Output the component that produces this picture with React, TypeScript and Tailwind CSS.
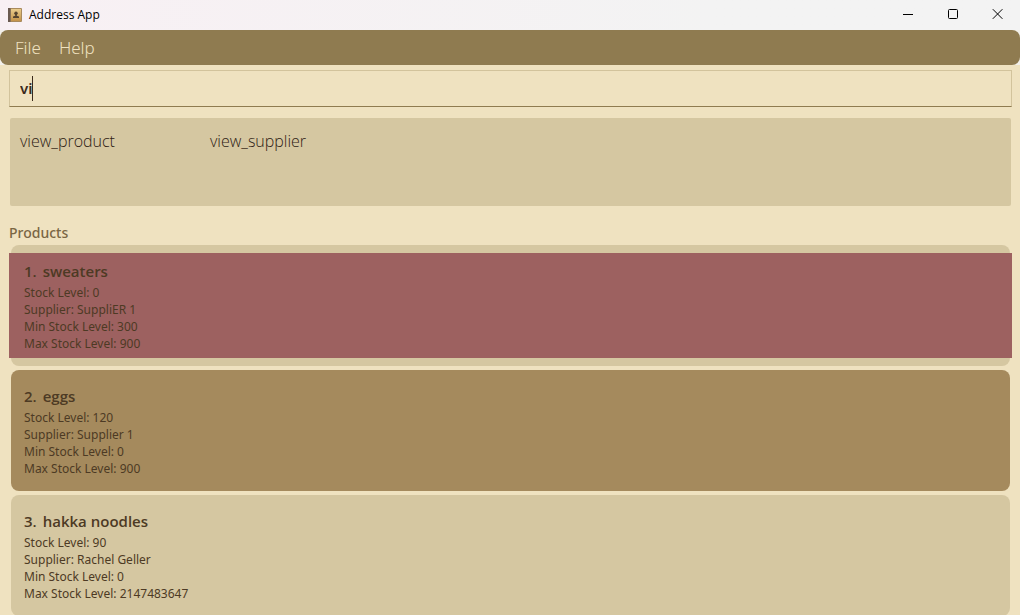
import { useState } from "react";

type Product = {
  name: string;
  stock: number;
  supplier: string;
  min: number;
  max: number;
};

const products: Product[] = [
  { name: "sweaters", stock: 0, supplier: "SuppliER 1", min: 300, max: 900 },
  { name: "eggs", stock: 120, supplier: "Supplier 1", min: 0, max: 900 },
  { name: "hakka noodles", stock: 90, supplier: "Rachel Geller", min: 0, max: 2147483647 },
];

const suggestions = ["view_product", "view_supplier"];

function AppIcon() {
  return (
    <svg width="14" height="14" viewBox="0 0 14 14" aria-hidden="true">
      <defs>
        <linearGradient id="cover" x1="0" y1="0" x2="0" y2="1">
          <stop offset="0" stopColor="#e9cb8c" />
          <stop offset="1" stopColor="#c4934a" />
        </linearGradient>
      </defs>
      <rect width="14" height="14" rx="1" fill="#a98a5c" />
      <rect width="2.500" height="14" fill="#6a5a50" />
      <rect x="3" y="1" width="10" height="12" fill="url(#cover)" />
      <circle cx="8" cy="5.2" r="1.7" fill="#54422f" />
      <path d="M7.2 6h1.600v1.800l2.200.8V10H5V8.600l2.200-.8z" fill="#54422f" />
    </svg>
  );
}

function TitleBar() {
  return (
    <header className="flex h-[30px] shrink-0 items-center justify-between bg-gradient-to-r from-[#f8f0f4] to-[#f3f3f3] to-70% pl-2">
      <div className="flex items-center gap-[7px]">
        <AppIcon />
        <h1 className="font-['Open_Sans','Noto_Sans',sans-serif] text-[12px] leading-4 text-black">Address App</h1>
      </div>
      <div className="flex h-full items-center pb-[2px]">
        <button type="button" aria-label="Minimize" className="flex h-full w-[45px] items-center justify-center">
          <svg width="10" height="10" viewBox="0 0 10 10" stroke="#000" fill="none">
            <path d="M0 5.500h10" />
          </svg>
        </button>
        <button type="button" aria-label="Maximize" className="flex h-full w-[45px] items-center justify-center">
          <svg width="10" height="10" viewBox="0 0 10 10" stroke="#000" fill="none">
            <rect x=".5" y=".5" width="9" height="9" rx="1" />
          </svg>
        </button>
        <button type="button" aria-label="Close" className="flex h-full w-[45px] items-center justify-center">
          <svg width="11" height="10" viewBox="0 0 11 10" stroke="#000" fill="none">
            <path d="M.8 .2l9.600 9.600M10.400 .2L.8 9.800" />
          </svg>
        </button>
      </div>
    </header>
  );
}

function ProductCard({ product, index }: { product: Product; index: number }) {
  const low = product.stock < product.min;
  const shade = index % 2 === 0 ? "bg-[#d5c7a1]" : "bg-[#a58a5d]";
  return (
    <li className={`shrink-0 rounded-lg py-2 ${shade}`}>
      <article className={`-mx-[2px] px-[15px] pt-[7px] pb-[6px] text-[#4d3a24] ${low ? "bg-[#9d6160]" : ""}`}>
        <h3 className="mb-[2px] flex gap-[6px] font-['Open_Sans','Noto_Sans',sans-serif] text-[15px] leading-[22px] font-semibold">
          <span>{index + 1}.</span>
          <span>{product.name}</span>
        </h3>
        <div className="text-[12px] leading-[17px]">
          <p>Stock Level: {product.stock}</p>
          <p>Supplier: {product.supplier}</p>
          <p>Min Stock Level: {product.min}</p>
          <p>Max Stock Level: {product.max}</p>
        </div>
      </article>
    </li>
  );
}

export default function App() {
  const [command, setCommand] = useState("vi");
  return (
    <div className="flex h-screen flex-col overflow-hidden bg-[#efe2c0] font-['Noto_Sans','Open_Sans',sans-serif]">
      <TitleBar />
      <div className="shrink-0 bg-[#f3f0ea]">
        <nav className="flex h-[35px] items-center gap-[18px] rounded-lg bg-[#8f7b50] px-[15px] text-[17px] leading-6 font-light text-[#efe2c0]">
          <button type="button">File</button>
          <button type="button">Help</button>
        </nav>
      </div>
      <main className="flex min-h-0 flex-1 flex-col pt-[5px] pr-2 pl-[9px]">
        <label className="flex h-[37px] shrink-0 items-center border border-[#d2c39c] border-b-[#8f7b50] px-[10px]">
          <input
            aria-label="Command"
            value={command}
            onChange={(e) => setCommand(e.target.value)}
            className="max-w-full bg-transparent pb-[2px] text-[15px] leading-6 font-semibold text-[#3a2a1c] caret-transparent outline-none [field-sizing:content]"
          />
          <span aria-hidden="true" className="h-[25px] w-px shrink-0 bg-[#3a2a1c]" />
        </label>
        <ul className="mx-px mt-[11px] flex h-[88px] shrink-0 rounded-xs bg-[#d5c7a1] px-[10px] pt-[11px] font-['Open_Sans','Noto_Sans',sans-serif] text-[16px] leading-6 font-light text-[#2e2013]">
          {suggestions.map((s) => (
            <li key={s} className="w-[190px]">
              {s}
            </li>
          ))}
        </ul>
        <h2 className="mt-[15px] shrink-0 text-[14px] leading-6 font-medium text-[#7a6644]">Products</h2>
        <ul className="flex min-h-0 flex-1 flex-col gap-1 px-[2px]">
          {products.map((p, i) => (
            <ProductCard key={p.name} product={p} index={i} />
          ))}
        </ul>
      </main>
    </div>
  );
}
